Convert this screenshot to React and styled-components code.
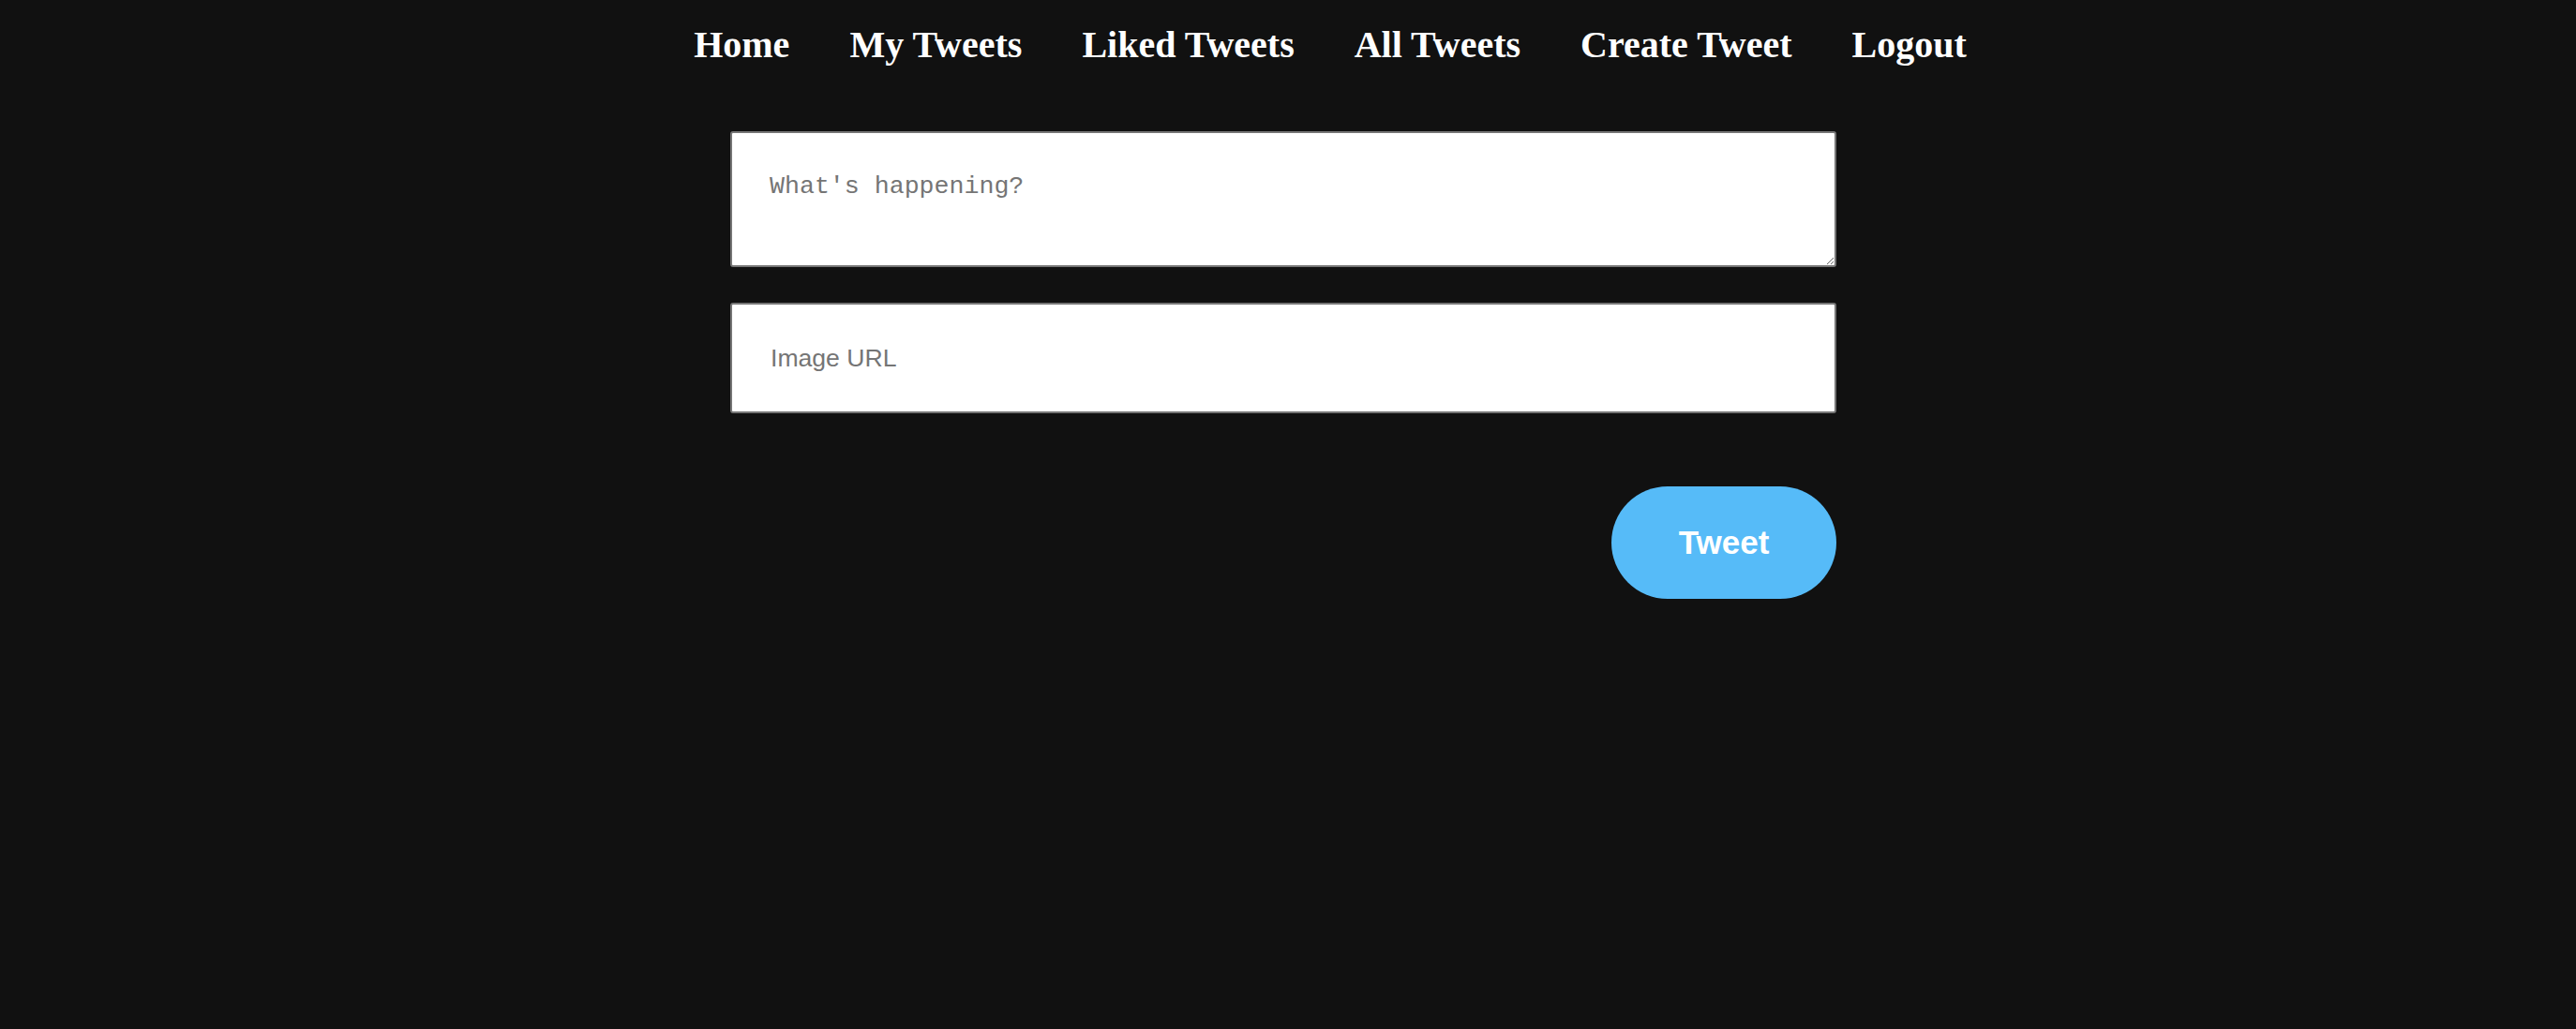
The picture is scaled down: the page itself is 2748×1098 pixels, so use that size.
import styled, { createGlobalStyle } from "styled-components";

const GlobalStyle = createGlobalStyle`
  html, body {
    margin: 0;
    padding: 0;
    background: #111111;
  }
  body {
    min-height: 1098px;
  }
`;

const Page = styled.div`
  display: flex;
  flex-direction: column;
  align-items: center;
  min-height: 1098px;
  background: #111111;
`;

const NavList = styled.ul`
  list-style: none;
  display: flex;
  justify-content: center;
  align-items: center;
  gap: 64px;
  margin: 0;
  padding: 28px 0 0 90px;
`;

const NavLink = styled.a`
  display: block;
  text-decoration: none;
  color: #ffffff;
  font-family: "Liberation Serif", "Times New Roman", serif;
  font-weight: 700;
  font-size: 40px;
  line-height: 40px;
  white-space: nowrap;
`;

const Form = styled.form`
  display: flex;
  flex-direction: column;
  width: 1180px;
  margin: 72px 10px 0 0;
`;

const TweetText = styled.textarea`
  box-sizing: border-box;
  width: 100%;
  height: 145px;
  padding: 42px 40px 10px;
  border: 2px solid #767676;
  border-radius: 3px;
  background: #ffffff;
  font-family: "Liberation Mono", "Courier New", monospace;
  font-size: 26.6px;
  color: #222;
  resize: vertical;

  &::placeholder {
    color: #757575;
  }
`;

const UrlInput = styled.input`
  box-sizing: border-box;
  width: 100%;
  height: 118px;
  margin-top: 38px;
  padding: 0 41px;
  border: 2px solid #767676;
  border-radius: 3px;
  background: #ffffff;
  font-family: "Liberation Sans", Arial, sans-serif;
  font-size: 26.6px;
  color: #222;

  &::placeholder {
    color: #757575;
  }
`;

const Actions = styled.div`
  display: flex;
  justify-content: flex-end;
  margin-top: 78px;
`;

const TweetButton = styled.button`
  width: 240px;
  height: 120px;
  border: none;
  border-radius: 60px;
  background: #56bbf8;
  color: #ffffff;
  font-family: "Liberation Sans", Arial, sans-serif;
  font-weight: 700;
  font-size: 35px;
  cursor: pointer;
`;

const links = ["Home", "My Tweets", "Liked Tweets", "All Tweets", "Create Tweet", "Logout"];

const App = () => {
  return (
    <Page>
      <GlobalStyle />
      <nav>
        <NavList>
          {links.map((l) => (
            <li key={l}>
              <NavLink href="#">{l}</NavLink>
            </li>
          ))}
        </NavList>
      </nav>

      <Form onSubmit={(e) => e.preventDefault()}>
        <TweetText placeholder="What's happening?" />
        <UrlInput type="text" placeholder="Image URL" />
        <Actions>
          <TweetButton type="submit">Tweet</TweetButton>
        </Actions>
      </Form>
    </Page>
  );
};

export default App;
